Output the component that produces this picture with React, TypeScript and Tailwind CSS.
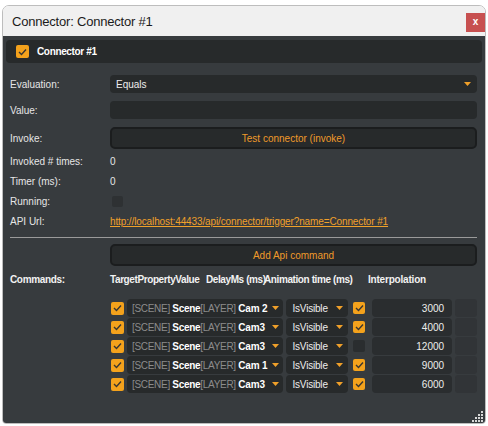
import React from "react";

type Cmd = { on: boolean; layer: string; prop: string; anim: boolean; ms: number };

const commands: Cmd[] = [
  { on: true, layer: "Cam 2", prop: "IsVisible", anim: true, ms: 3000 },
  { on: true, layer: "Cam3", prop: "IsVisible", anim: true, ms: 4000 },
  { on: true, layer: "Cam3", prop: "IsVisible", anim: false, ms: 12000 },
  { on: true, layer: "Cam 1", prop: "IsVisible", anim: true, ms: 9000 },
  { on: true, layer: "Cam3", prop: "IsVisible", anim: true, ms: 6000 },
];

function Check({ checked, className = "" }: { checked: boolean; className?: string }) {
  return (
    <div
      className={`flex items-center justify-center rounded-[2px] ${
        checked ? "bg-[#f4a21c]" : "bg-[#2a2d2f]"
      } ${className}`}
    >
      {checked && (
        <svg width="9" height="8" viewBox="0 0 9 8" fill="none">
          <polyline points="1,4 3.5,6.5 8,1.5" stroke="#3a3630" strokeWidth="1.4" />
        </svg>
      )}
    </div>
  );
}

function Caret({ className = "" }: { className?: string }) {
  return (
    <svg width="7" height="4" viewBox="0 0 7 4" className={className}>
      <polygon points="0,0 7,0 3.5,4" fill="#f0a02a" />
    </svg>
  );
}

function Label({ children }: { children: React.ReactNode }) {
  return <div className="w-[100px] shrink-0 text-[10px] text-[#e6e6e6]">{children}</div>;
}

export default function App() {
  return (
    <div
      className="bg-white w-[488px] h-[426px] pt-[5px] pl-[2px]"
      style={{ fontFamily: '"Liberation Sans", Arial, sans-serif' }}
    >
      <div className="relative w-[484px] h-[419px] border border-[#bdbdbd] rounded-t-[7px] rounded-b-[4px] overflow-hidden flex flex-col">
        {/* title bar */}
        <div className="h-[30px] shrink-0 bg-[#f0f0f0] flex items-center justify-between pl-[9px]">
          <span className="text-[13px] text-[#1b1b1b] tracking-[-0.2px] mt-[1px]">Connector: Connector #1</span>
          <button className="w-[19px] h-[19px] bg-[#c75050] flex items-center justify-center mt-[2px]">
            <span className="text-white text-[10px] font-bold leading-none">x</span>
          </button>
        </div>

        {/* body */}
        <div className="flex-1 bg-[#373b3e] flex flex-col px-[3px] pt-[4px]">
          <div className="h-[23px] bg-[#272a2b] rounded-[4px] flex items-center pl-[10px] gap-[8px]">
            <Check checked className="w-[13px] h-[13px]" />
            <span className="text-[10px] font-bold text-white tracking-[-0.35px]">Connector #1</span>
          </div>

          <div className="flex flex-col pl-[4px] pr-[5px] mt-[12px]">
            <div className="flex items-center h-[18px]">
              <Label>Evaluation:</Label>
              <div className="flex-1 h-full bg-[#272a2b] rounded-[4px] flex items-center justify-between pl-[6px] pr-[6px]">
                <span className="text-[10px] text-[#ededed]">Equals</span>
                <Caret />
              </div>
            </div>

            <div className="flex items-center h-[18px] mt-[8px]">
              <Label>Value:</Label>
              <div className="flex-1 h-full bg-[#272a2b] rounded-[4px]" />
            </div>

            <div className="flex items-center h-[22px] mt-[8px]">
              <Label>Invoke:</Label>
              <button className="flex-1 h-full bg-[#272a2b] border-2 border-[#1b1d1e] rounded-[5px] text-[10px] text-[#ef9a2a]">
                Test connector (invoke)
              </button>
            </div>

            <div className="flex items-center h-[20px] mt-[2px]">
              <Label>Invoked # times:</Label>
              <span className="text-[10px] text-[#e6e6e6]">0</span>
            </div>
            <div className="flex items-center h-[20px]">
              <Label>Timer (ms):</Label>
              <span className="text-[10px] text-[#e6e6e6]">0</span>
            </div>
            <div className="flex items-center h-[20px]">
              <Label>Running:</Label>
              <Check checked={false} className="w-[11px] h-[11px] ml-[2px] bg-[#2e3133]" />
            </div>
            <div className="flex items-center h-[20px]">
              <Label>API Url:</Label>
              <a className="text-[10px] text-[#f0a02a] underline tracking-[-0.12px] cursor-pointer">
                http://localhost:44433/api/connector/trigger?name=Connector #1
              </a>
            </div>

            <div className="h-px bg-[#9a9a9a] mt-[6px]" />

            <div className="flex items-center h-[22px] mt-[6px]">
              <div className="w-[100px] shrink-0" />
              <button className="flex-1 h-full bg-[#272a2b] border-2 border-[#1b1d1e] rounded-[5px] text-[10px] text-[#ef9a2a]">
                Add Api command
              </button>
            </div>

            <div className="flex items-center h-[20px] mt-[3px] text-[10px] font-bold text-[#f2f2f2] whitespace-nowrap tracking-[-0.4px]">
              <div className="w-[100px] shrink-0 tracking-[-0.35px]">Commands:</div>
              <span className="w-[96px] shrink-0">TargetPropertyValue</span>
              <span className="w-[58px] shrink-0">DelayMs (ms)</span>
              <span className="w-[104px] shrink-0">Animation time (ms)</span>
              <span className="tracking-[-0.2px]">Interpolation</span>
            </div>

            <div className="flex flex-col gap-[1px] mt-[10px] pl-[101px]">
              {commands.map((c, i) => (
                <div key={i} className="flex items-center h-[18px]">
                  <Check checked={c.on} className="w-[13px] h-[13px]" />
                  <div className="ml-[3px] w-[157px] h-full bg-[#272a2b] rounded-[4px] flex items-center justify-between pl-[5px] pr-[4px] text-[10px] whitespace-nowrap">
                    <span>
                      <span className="text-[#8c8c8c] tracking-[-0.3px]">[SCENE] </span>
                      <span className="font-bold text-white tracking-[-0.3px]">Scene</span>
                      <span className="text-[#8c8c8c] tracking-[-0.3px]">[LAYER] </span>
                      <span className="font-bold text-white tracking-[-0.2px]">{c.layer}</span>
                    </span>
                    <Caret />
                  </div>
                  <div className="ml-[3px] w-[62px] h-full bg-[#272a2b] rounded-[4px] flex items-center justify-between pl-[6px] pr-[5px]">
                    <span className="text-[10px] text-[#ededed] tracking-[-0.2px]">{c.prop}</span>
                    <Caret />
                  </div>
                  <Check checked={c.anim} className="ml-[5px] w-[12px] h-[12px]" />
                  <div className="ml-[7px] w-[80px] h-full bg-[#2a2d2f] rounded-[4px] flex items-center justify-end pr-[8px]">
                    <span className="text-[10px] text-[#ededed]">{c.ms}</span>
                  </div>
                  <div className="ml-[3px] w-[22px] h-full bg-[#313437] rounded-[3px]" />
                </div>
              ))}
            </div>
          </div>
        </div>

        {/* resize grip */}
        <svg className="absolute right-[2px] bottom-[1px]" width="11" height="11" viewBox="0 0 11 11">
          {[
            [9, 1],
            [9, 4],
            [6, 4],
            [9, 7],
            [6, 7],
            [3, 7],
            [9, 10],
            [6, 10],
            [3, 10],
            [0, 10],
          ].map(([x, y], i) => (
            <rect key={i} x={x} y={y - 1} width="2" height="2" fill="#d8d8d8" />
          ))}
        </svg>
      </div>
    </div>
  );
}
